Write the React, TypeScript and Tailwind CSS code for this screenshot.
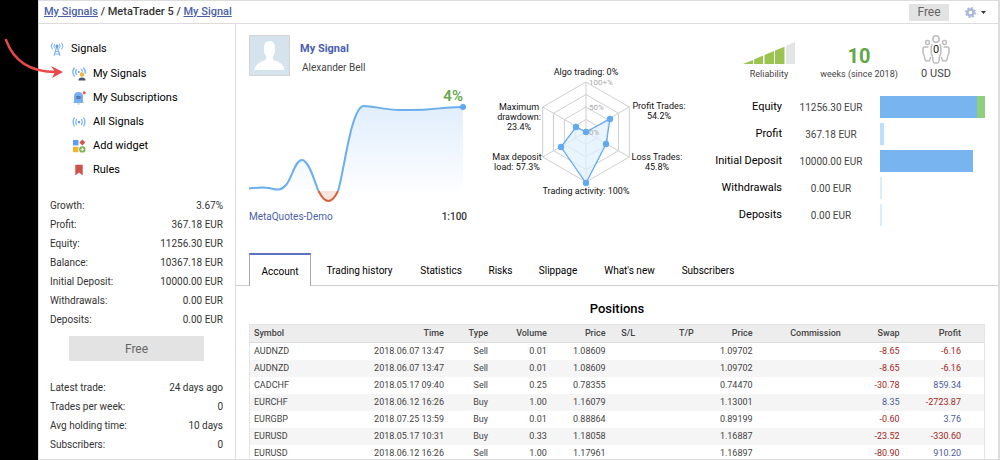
import type { ReactNode } from 'react';

const crumbClass = 'text-[#4a5fa8] underline';

const accountStats = [
  ['Growth:', '3.67%'],
  ['Profit:', '367.18 EUR'],
  ['Equity:', '11256.30 EUR'],
  ['Balance:', '10367.18 EUR'],
  ['Initial Deposit:', '10000.00 EUR'],
  ['Withdrawals:', '0.00 EUR'],
  ['Deposits:', '0.00 EUR'],
];

const tradeStats = [
  ['Latest trade:', '24 days ago'],
  ['Trades per week:', '0'],
  ['Avg holding time:', '10 days'],
  ['Subscribers:', '0'],
];

interface Balance {
  label: string;
  value: string;
  parts: { pct: number; color: string }[];
}

const balances: Balance[] = [
  { label: 'Equity', value: '11256.30 EUR', parts: [{ pct: 92, color: 'bg-[#78b4f0]' }, { pct: 8, color: 'bg-[#8fce7c]' }] },
  { label: 'Profit', value: '367.18 EUR', parts: [{ pct: 3.5, color: 'bg-[#bbe0fb]' }] },
  { label: 'Initial Deposit', value: '10000.00 EUR', parts: [{ pct: 88.8, color: 'bg-[#78b4f0]' }] },
  { label: 'Withdrawals', value: '0.00 EUR', parts: [{ pct: 1.5, color: 'bg-[#d9edfb]' }] },
  { label: 'Deposits', value: '0.00 EUR', parts: [{ pct: 1.5, color: 'bg-[#d9edfb]' }] },
];

const tabs = [
  { label: 'Account', width: 'w-[62px]' },
  { label: 'Trading history', width: 'w-[97px]' },
  { label: 'Statistics', width: 'w-[66px]' },
  { label: 'Risks', width: 'w-[53px]' },
  { label: 'Slippage', width: 'w-[62px]' },
  { label: "What's new", width: 'w-[81px]' },
  { label: 'Subscribers', width: 'w-[76px]' },
];

const columns = [
  { label: 'Symbol', width: 'w-[11%]' },
  { label: 'Time', width: 'w-[16%]' },
  { label: 'Type', width: 'w-[6%]' },
  { label: 'Volume', width: 'w-[8%]' },
  { label: 'Price', width: 'w-[8%]' },
  { label: 'S/L', width: 'w-[4%]' },
  { label: 'T/P', width: 'w-[8%]' },
  { label: 'Price', width: 'w-[8%]' },
  { label: 'Commission', width: 'w-[12%]' },
  { label: 'Swap', width: 'w-[8%]' },
  { label: 'Profit', width: 'w-[11%]' },
];

const positions = [
  ['AUDNZD', '2018.06.07 13:47', 'Sell', '0.01', '1.08609', '', '', '1.09702', '', '-8.65', '-6.16'],
  ['AUDNZD', '2018.06.07 13:47', 'Sell', '0.01', '1.08609', '', '', '1.09702', '', '-8.65', '-6.16'],
  ['CADCHF', '2018.05.17 09:40', 'Sell', '0.25', '0.78355', '', '', '0.74470', '', '-30.78', '859.34'],
  ['EURCHF', '2018.06.12 16:26', 'Buy', '1.00', '1.16079', '', '', '1.13001', '', '8.35', '-2723.87'],
  ['EURGBP', '2018.07.25 13:59', 'Buy', '0.01', '0.88864', '', '', '0.89199', '', '-0.60', '3.76'],
  ['EURUSD', '2018.05.17 10:31', 'Buy', '0.33', '1.18058', '', '', '1.16887', '', '-23.52', '-330.60'],
  ['EURUSD', '2018.06.12 16:26', 'Sell', '1.00', '1.17961', '', '', '1.16897', '', '-80.90', '910.20'],
];

function cellColor(col: number, value: string) {
  if (col < 9) return 'text-[#444]';
  return value.startsWith('-') ? 'text-[#a3261c]' : 'text-[#4a5a9e]';
}

const TowerIcon = () => (
  <svg width="14" height="14" viewBox="0 0 14 14">
    <g fill="none" stroke="#7fb2f3" strokeLinecap="round">
      <path d="M4.4 2.2Q3.2 4 4.4 6M2.2 1Q-.2 4 2.2 7.2M9.6 2.2Q10.8 4 9.6 6M11.8 1Q14.2 4 11.8 7.2" />
      <path d="M6.6 5L4.2 13.3M7.4 5L9.8 13.3M5.4 9.5H8.6M4.6 12H9.4" strokeWidth="1.2" />
    </g>
    <circle cx="7" cy="4" r="1.6" fill="#5b9df0" />
  </svg>
);

const MySignalsIcon = () => (
  <svg width="14" height="14" viewBox="0 0 14 14">
    <path d="M4.4 2.6Q3 5 4.4 7.4M2.3 1Q-.6 5 2.3 9M9.4 2.6Q10.2 3.4 10.3 4M11.7 1Q13.4 3 13.2 6"
      fill="none" stroke="#7fb2f3" strokeWidth="1.4" strokeLinecap="round" />
    <circle cx="6.8" cy="5" r="1" fill="#5b9df0" />
    <circle cx="10" cy="7.5" r="2.2" fill="#f0b23c" />
    <path d="M6.4 13.6Q6.4 10.4 10 10.4Q13.6 10.4 13.6 13.6Z" fill="#47566b" />
  </svg>
);

const BellIcon = () => (
  <svg width="14" height="14" viewBox="0 0 14 14">
    <path d="M2 11V5.5Q2 1 6.5 1T11 5.5V11L12 12H1Z" fill="#78aef2" />
    <path d="M5 12.3H8Q8 13.8 6.5 13.8T5 12.3Z" fill="#c5ccd6" />
    <path d="M4.3 5.8H8.7M4.3 7.2H8.7" stroke="#3c5f93" />
    <circle cx="12.2" cy="1.8" r="1.5" fill="#e0574c" />
  </svg>
);

const AllSignalsIcon = () => (
  <svg width="14" height="14" viewBox="0 0 14 14">
    <path d="M4.5 4.5Q3 7 4.5 9.5M2.3 3Q-.2 7 2.3 11M9.5 4.5Q11 7 9.5 9.5M11.7 3Q14.2 7 11.7 11"
      fill="none" stroke="#7fb2f3" strokeWidth="1.3" strokeLinecap="round" />
    <circle cx="7" cy="7" r="1.2" fill="#5b9df0" />
  </svg>
);

const WidgetIcon = () => (
  <svg width="14" height="14" viewBox="0 0 14 14">
    <rect x="1" y="1" width="5.4" height="5.4" fill="#5b9df0" />
    <path d="M10.3 .6L13.3 3.6L10.3 6.6L7.3 3.6Z" fill="#d9544a" />
    <rect x="1" y="7.8" width="5.4" height="5.4" fill="#f2b12f" />
    <circle cx="10.3" cy="10.4" r="3.2" fill="#7ab659" />
    <path d="M10.3 8.8V12M8.7 10.4H11.9" stroke="#fff" />
  </svg>
);

const RulesIcon = () => (
  <svg width="14" height="14" viewBox="0 0 14 14">
    <path d="M3.3 1.8H10.7V12.6L7 9.6L3.3 12.6Z" fill="#cf5148" />
  </svg>
);

const menu: { label: string; icon: ReactNode }[] = [
  { label: 'My Signals', icon: <MySignalsIcon /> },
  { label: 'My Subscriptions', icon: <BellIcon /> },
  { label: 'All Signals', icon: <AllSignalsIcon /> },
  { label: 'Add widget', icon: <WidgetIcon /> },
  { label: 'Rules', icon: <RulesIcon /> },
];

function StatList({ rows }: { rows: string[][] }) {
  return (
    <dl className="pl-[11px] pr-3 text-[10px] leading-[19px] text-[#333]">
      {rows.map(([label, value]) => (
        <div key={label} className="flex justify-between">
          <dt>{label}</dt>
          <dd>{value}</dd>
        </div>
      ))}
    </dl>
  );
}

function Sidebar() {
  return (
    <aside className="w-[197px] shrink-0 border-r border-[#dcdcdc]">
      <nav className="pt-[13px] text-[11px] text-black">
        <a href="#signals" className="flex h-6 items-center gap-[7px] pl-[11px]"><TowerIcon />Signals</a>
        <div className="pt-px">
          {menu.map((m) => (
            <a key={m.label} href="#menu" className="flex h-6 items-center gap-[7px] pl-[33px]">{m.icon}{m.label}</a>
          ))}
        </div>
      </nav>
      <div className="mt-[14px]"><StatList rows={accountStats} /></div>
      <button className="mx-[30px] mt-[7px] mb-[17px] block h-[25px] w-[135px] bg-[#e3e3e3] text-xs text-[#666]">Free</button>
      <StatList rows={tradeStats} />
    </aside>
  );
}

function GrowthChart() {
  return (
    <svg width="218" height="120" viewBox="0 0 218 120" className="mt-[9px]">
      <defs>
        <linearGradient id="fill" x1="0" y1="0" x2="0" y2="1">
          <stop offset="0" stopColor="#e0eefc" />
          <stop offset="1" stopColor="#fdfeff" />
        </linearGradient>
      </defs>
      <path d="M0 103.500C8 102.500 14 102 20 103S31 107 37 100C43 93 46 75 53 75S66 98 69.500 106H89C95 88 102 21 115 21C126 21 134 25 152 25C188 26 184 22 214 22V106H0Z" fill="url(#fill)" />
      <path d="M69.500 106Q79.500 126 89 106Z" fill="#fae6e0" />
      <g fill="none" strokeWidth="2">
        <path d="M0 103.500C8 102.500 14 102 20 103S31 107 37 100C43 93 46 75 53 75S66 98 69.500 106" stroke="#6aaeee" />
        <path d="M69.500 106Q79.500 126 89 106" stroke="#d9603a" />
        <path d="M89 106C95 88 102 21 115 21C126 21 134 25 152 25C188 26 184 22 214 22" stroke="#6aaeee" />
      </g>
      <circle cx="214" cy="22" r="3" fill="#5fa8ec" />
      <text x="214" y="16" textAnchor="end" fontSize="15" fontWeight="600" fill="#6aa84f">4%</text>
    </svg>
  );
}

const hexPoints = (r: number) =>
  [0, 1, 2, 3, 4, 5].map((i) => `${119 + r * Math.sin((i * Math.PI) / 3)},${72 - r * Math.cos((i * Math.PI) / 3)}`).join(' ');

const radarDots = [[119, 72], [143, 59], [139, 84], [119, 123], [94, 87], [109, 67]];

const radarLabels = [
  { x: 119, y: 15, lines: ['Algo trading: 0%'] },
  { x: 192, y: 49, lines: ['Profit Trades:', '54.2%'] },
  { x: 190, y: 100, lines: ['Loss Trades:', '45.8%'] },
  { x: 119, y: 134, lines: ['Trading activity: 100%'] },
  { x: 50, y: 100, lines: ['Max deposit', 'load: 57.3%'] },
  { x: 52, y: 50, lines: ['Maximum', 'drawdown:', '23.4%'] },
];

function Radar() {
  return (
    <svg width="238" height="142" viewBox="0 0 238 142" className="mx-auto mt-9">
      <g fill="none" stroke="#cfcfcf">
        {[12.5, 25, 37.5, 50].map((r) => <polygon key={r} points={hexPoints(r)} />)}
        <path d="M119 22V122M75.700 47L162.300 97M75.700 97L162.300 47" />
      </g>
      <polygon points={radarDots.map((d) => d.join(',')).join(' ')} fill="#dff1fd" fillOpacity="0.7" stroke="#62aaf0" strokeWidth="1.3" />
      <g fontSize="8" fill="#aaa">
        <text x="122" y="25">100+%</text>
        <text x="122" y="50">50%</text>
        <text x="122" y="75">0%</text>
      </g>
      {radarDots.map(([x, y]) => <circle key={`${x}-${y}`} cx={x} cy={y} r="3.200" fill="#62aaf0" />)}
      <g fontSize="9" fill="#111" textAnchor="middle">
        {radarLabels.map((l) => l.lines.map((t, i) => (
          <text key={t} x={l.x} y={l.y + i * 10}>{t}</text>
        )))}
      </g>
    </svg>
  );
}

function Summary() {
  return (
    <div>
      <div className="flex pl-[19px] pt-[11px] text-center text-[#444]">
        <div className="flex w-[90px] flex-col items-center">
          <svg width="52" height="29" viewBox="0 0 52 29">
            <path d="M0 29L10 25V29ZM11 24.500L20 20.500V29H11ZM21.500 20L31 16V29H21.500ZM32 15.600L41.500 11.700V29H32Z" fill="#9bc352" />
            <path d="M43 11L52 7V29H43Z" fill="#e4e4e4" />
          </svg>
          <span className="text-[9px] leading-[20px]">Reliability</span>
        </div>
        <div className="flex w-[90px] flex-col items-center">
          <strong className="pt-[14px] text-xl leading-[15px] text-[#5fa845]">10</strong>
          <span className="whitespace-nowrap text-[9px] leading-[20px]">weeks (since 2018)</span>
        </div>
        <div className="flex w-[64px] flex-col items-center">
          <svg width="28" height="29" viewBox="0 0 28 29">
            <g fill="none" stroke="#bdbdbd" strokeWidth="1.5" strokeLinejoin="round" strokeLinecap="round">
              <circle cx="14" cy="4" r="3.200" />
              <circle cx="5.500" cy="7.500" r="2" />
              <circle cx="22.500" cy="7.500" r="2" />
              <path d="M10 9.500Q8.800 11 9.200 18.500Q10.500 20 11 26Q11.300 28 12.500 28H15.500Q16.700 28 17 26Q17.500 20 18.800 18.500Q19.200 11 18 9.500" />
              <path d="M6 12H2.800Q1 12 1 14V18.500Q2.500 20 3 24.500Q3.300 26 4.500 26H6.500Q8 26 8.300 22.500M22 12H25.200Q27 12 27 14V18.500Q25.500 20 25 24.500Q24.700 26 23.500 26H21.500Q20 26 19.700 22.500" />
            </g>
            <text x="14" y="18" textAnchor="middle" fontSize="11" fill="#222">0</text>
          </svg>
          <span className="text-[11px] leading-[20px]">0 USD</span>
        </div>
      </div>
      <dl className="mt-3 flex flex-col gap-[5px] text-[10px]">
        {balances.map((b) => (
          <div key={b.label} className="grid h-[22px] grid-cols-[77px_98px_1fr] items-center">
            <dt className="whitespace-nowrap text-right text-[11px] text-black">{b.label}</dt>
            <dd className="text-center text-[#444]">{b.value}</dd>
            <dd className="flex h-full">
              {b.parts.map((p) => <span key={p.color} className={p.color} style={{ width: `${p.pct}%` }} />)}
            </dd>
          </div>
        ))}
      </dl>
    </div>
  );
}

function Positions() {
  return (
    <section className="px-[13px] pt-[13px]">
      <h2 className="text-center text-[13px] font-medium leading-5 text-black">Positions</h2>
      <table className="mt-[5px] w-full table-fixed border border-[#e4e4e4] text-right text-[9px] leading-[17px]">
        <thead>
          <tr className="border-b border-[#dcdcdc] bg-[#ededed] text-[#444]">
            {columns.map((c, i) => (
              <th key={i} className={`${c.width} whitespace-nowrap font-medium first:pl-1 first:text-left not-first:pr-1 last:pr-[23px]`}>{c.label}</th>
            ))}
          </tr>
        </thead>
        <tbody>
          {positions.map((row, r) => (
            <tr key={r} className="even:bg-[#f5f5f5]">
              {row.map((v, i) => (
                <td key={i} className={`${cellColor(i, v)} whitespace-nowrap first:pl-1 first:text-left not-first:pr-1 last:pr-[23px]`}>{v}</td>
              ))}
            </tr>
          ))}
        </tbody>
      </table>
    </section>
  );
}

export default function App() {
  return (
    <div className="relative h-screen overflow-hidden bg-black pl-[38px] font-['Trebuchet_MS',Roboto,sans-serif]">
      <div className="flex h-full flex-col overflow-hidden border border-r-2 border-[#dcdcdc] bg-white">
        <header className="flex h-[23px] shrink-0 items-center justify-between border-b border-[#dcdcdc] pl-[5px] pr-3">
          <div className="text-[11px] font-medium text-[#333]">
            <a href="#my" className={crumbClass}>My Signals</a> / MetaTrader 5 / <a href="#signal" className={crumbClass}>My Signal</a>
          </div>
          <div className="flex items-center gap-4">
            <button className="h-[17px] w-10 bg-[#e3e3e3] text-xs leading-[17px] text-[#666]">Free</button>
            <button aria-label="Settings" className="flex items-center gap-[5px]">
              <svg width="11" height="11" viewBox="0 0 11 11">
                <circle cx="5.500" cy="5.500" r="4.600" fill="none" stroke="#a9b8d8" strokeWidth="1.800" strokeDasharray="1.900 1.700" />
                <circle cx="5.500" cy="5.500" r="3" fill="none" stroke="#a9b8d8" strokeWidth="2.400" />
              </svg>
              <svg width="5" height="3" viewBox="0 0 5 3"><path d="M0 0H5L2.500 3Z" fill="#333" /></svg>
            </button>
          </div>
        </header>

        <div className="flex min-h-0 flex-1">
          <Sidebar />
          <main className="min-w-0 flex-1">
            <div className="grid grid-cols-[218px_1fr_280px] px-[13px]">
              <div className="pt-[11px]">
                <div className="flex gap-[10px]">
                  <svg width="41" height="41" viewBox="0 0 41 41">
                    <rect x=".5" y=".5" width="40" height="40" fill="#d5e3ec" stroke="#d3d3d3" />
                    <path d="M5.500 35Q6 28 16.500 25Q18 23 16.500 20Q14.500 18 15 13Q15 6 20.500 6T26 13Q26.500 18 24.500 20Q23 23 24.500 25Q35 28 35.500 35Z" fill="#fff" />
                  </svg>
                  <div>
                    <a href="#signal" className="block pt-1 text-[11px] font-bold leading-5 text-[#4a5fb0]">My Signal</a>
                    <p className="pl-[2px] text-[10px] leading-[17px] text-[#444]">Alexander Bell</p>
                  </div>
                </div>
                <GrowthChart />
                <div className="flex justify-between text-[10px] leading-6">
                  <a href="#server" className="text-[#4a5fa8]">MetaQuotes-Demo</a>
                  <span className="font-medium text-[#333]">1:100</span>
                </div>
              </div>
              <Radar />
              <Summary />
            </div>

            <div role="tablist" className="mt-6 flex h-[33px] border-b border-[#cfcfcf] pl-[13px] text-[10px] text-black">
              {tabs.map((t, i) => (
                <button key={t.label} role="tab" aria-selected={i === 0}
                  className={`${t.width} whitespace-nowrap border-t-2 pt-px ${i === 0 ? '-mb-px border-x border-x-[#aaa] border-t-[#5a72c4] bg-white' : 'border-t-transparent'}`}>
                  {t.label}
                </button>
              ))}
            </div>

            <Positions />
          </main>
        </div>
      </div>

      {/* pointer to the active menu entry */}
      <svg width="64" height="44" viewBox="0 0 64 44" className="absolute left-0 top-[38px]">
        <path d="M6 2C14 24 32 34 56 34" fill="none" stroke="#e9484a" strokeWidth="2.400" strokeLinecap="round" />
        <path d="M51 28L63 34L52 40L55 34Z" fill="#e9484a" />
      </svg>
    </div>
  );
}
